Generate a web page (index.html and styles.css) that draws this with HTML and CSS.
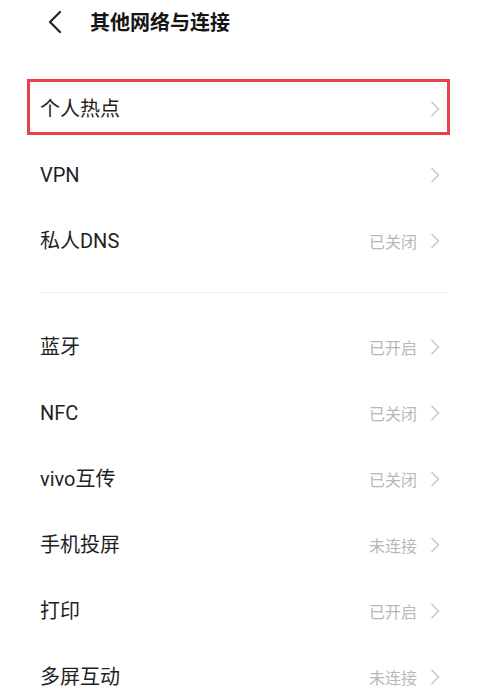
FILE: index.html
```html
<!DOCTYPE html>
<html lang="zh-CN">
<head>
<meta charset="utf-8">
<title>其他网络与连接</title>
<link rel="stylesheet" href="styles.css">
</head>
<body>
<div class="page">
  <header class="header">
    <svg class="back" width="16" height="24" viewBox="0 0 16 24"><polyline points="13,2 3,12 13,22" fill="none" stroke="#222" stroke-width="2.2" stroke-linecap="round" stroke-linejoin="round"/></svg>
    <h1 class="title">其他网络与连接</h1>
  </header>

  <section class="group first">
    <div class="row highlighted"><span class="label">个人热点</span><span class="right"><svg class="chev" width="10" height="16" viewBox="0 0 10 16"><polyline points="1.5,1 8.5,8 1.5,15" fill="none" stroke="#c8c8c8" stroke-width="1.5"/></svg></span></div>
    <div class="row"><span class="label">VPN</span><span class="right"><svg class="chev" width="10" height="16" viewBox="0 0 10 16"><polyline points="1.5,1 8.5,8 1.5,15" fill="none" stroke="#c8c8c8" stroke-width="1.5"/></svg></span></div>
    <div class="row"><span class="label">私人DNS</span><span class="right"><span class="status">已关闭</span><svg class="chev" width="10" height="16" viewBox="0 0 10 16"><polyline points="1.5,1 8.5,8 1.5,15" fill="none" stroke="#c8c8c8" stroke-width="1.5"/></svg></span></div>
  </section>

  <div class="divider"></div>

  <section class="group">
    <div class="row"><span class="label">蓝牙</span><span class="right"><span class="status">已开启</span><svg class="chev" width="10" height="16" viewBox="0 0 10 16"><polyline points="1.5,1 8.5,8 1.5,15" fill="none" stroke="#c8c8c8" stroke-width="1.5"/></svg></span></div>
    <div class="row"><span class="label">NFC</span><span class="right"><span class="status">已关闭</span><svg class="chev" width="10" height="16" viewBox="0 0 10 16"><polyline points="1.5,1 8.5,8 1.5,15" fill="none" stroke="#c8c8c8" stroke-width="1.5"/></svg></span></div>
    <div class="row"><span class="label">vivo互传</span><span class="right"><span class="status">已关闭</span><svg class="chev" width="10" height="16" viewBox="0 0 10 16"><polyline points="1.5,1 8.5,8 1.5,15" fill="none" stroke="#c8c8c8" stroke-width="1.5"/></svg></span></div>
    <div class="row"><span class="label">手机投屏</span><span class="right"><span class="status">未连接</span><svg class="chev" width="10" height="16" viewBox="0 0 10 16"><polyline points="1.5,1 8.5,8 1.5,15" fill="none" stroke="#c8c8c8" stroke-width="1.5"/></svg></span></div>
    <div class="row"><span class="label">打印</span><span class="right"><span class="status">已开启</span><svg class="chev" width="10" height="16" viewBox="0 0 10 16"><polyline points="1.5,1 8.5,8 1.5,15" fill="none" stroke="#c8c8c8" stroke-width="1.5"/></svg></span></div>
    <div class="row"><span class="label">多屏互动</span><span class="right"><span class="status">未连接</span><svg class="chev" width="10" height="16" viewBox="0 0 10 16"><polyline points="1.5,1 8.5,8 1.5,15" fill="none" stroke="#c8c8c8" stroke-width="1.5"/></svg></span></div>
  </section>
</div>
</body>
</html>
```

FILE: styles.css
```css
html, body {
  margin: 0;
  padding: 0;
  background: #ffffff;
  overflow: hidden;
}
body {
  font-family: Roboto, "Noto Sans CJK SC", sans-serif;
  color: #1f1f1f;
}
.page {
  width: 500px;
  height: 696px;
  overflow: hidden;
}
.header {
  display: flex;
  align-items: center;
  height: 44px;
  padding-left: 47px;
}
.back {
  display: block;
  flex: none;
}
.title {
  margin: 0 0 0 27px;
  font-size: 20px;
  font-weight: 600;
  color: #151515;
  font-family: "Noto Sans CJK SC", sans-serif;
  line-height: 24px;
}
.group.first {
  margin-top: 32px;
}
.row {
  position: relative;
  display: flex;
  align-items: center;
  justify-content: space-between;
  height: 66px;
  padding: 0 60px 0 40px;
}
.label {
  font-size: 20px;
  line-height: 24px;
  color: #1f1f1f;
}
.right {
  display: flex;
  align-items: center;
}
.status {
  font-size: 16px;
  color: #b8b8b8;
  margin-right: 13px;
  line-height: 20px;
  font-family: "Noto Sans CJK SC", sans-serif;
}
.chev {
  display: block;
}
.highlighted::after {
  content: "";
  position: absolute;
  left: 27px;
  right: 50px;
  top: 3px;
  bottom: 7px;
  border: 3px solid #e5434b;
}
.divider {
  height: 1px;
  background: #eeeeee;
  margin: 18px 53px 21px 40px;
}
```
